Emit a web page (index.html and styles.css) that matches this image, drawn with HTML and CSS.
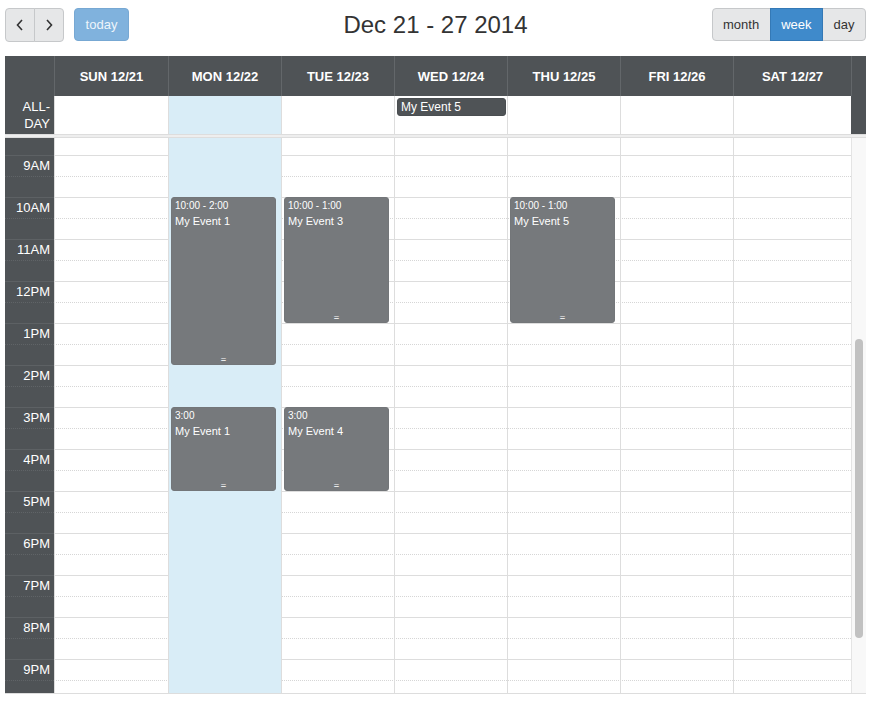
FILE: index.html
```html
<!DOCTYPE html>
<html>
<head>
<meta charset="utf-8">
<link rel="stylesheet" href="styles.css">
</head>
<body>
<div class="cal">
  <div class="toolbar">
    <div class="tb-left">
      <div class="btn-group">
        <button class="btn btn-icon"><svg width="10" height="14" viewBox="0 0 10 14"><polyline points="7,2 2.5,7 7,12" fill="none" stroke="#333" stroke-width="1.6"/></svg></button>
        <button class="btn btn-icon"><svg width="10" height="14" viewBox="0 0 10 14"><polyline points="3,2 7.5,7 3,12" fill="none" stroke="#333" stroke-width="1.6"/></svg></button>
      </div>
      <button class="btn btn-today">today</button>
    </div>
    <h2 class="title">Dec 21 - 27 2014</h2>
    <div class="tb-right">
      <div class="btn-group">
        <button class="btn btn-text">month</button>
        <button class="btn btn-text active">week</button>
        <button class="btn btn-text">day</button>
      </div>
    </div>
  </div>

  <div class="view">
    <div class="grid-row head">
      <div class="axis"></div>
      <div class="hcell">SUN 12/21</div>
      <div class="hcell">MON 12/22</div>
      <div class="hcell">TUE 12/23</div>
      <div class="hcell">WED 12/24</div>
      <div class="hcell">THU 12/25</div>
      <div class="hcell">FRI 12/26</div>
      <div class="hcell">SAT 12/27</div>
      <div class="gutter"></div>
    </div>

    <div class="grid-row allday">
      <div class="axis allday-label">ALL-DAY</div>
      <div class="dcell"></div>
      <div class="dcell today"></div>
      <div class="dcell"></div>
      <div class="dcell"><div class="ad-event">My Event 5</div></div>
      <div class="dcell"></div>
      <div class="dcell"></div>
      <div class="dcell"></div>
      <div class="gutter dark"></div>
    </div>

    <div class="divider"></div>

    <div class="body">
      <div class="scroller">
        <div class="inner">
          <div class="slats">
            <div class="slat half"><div class="ax"></div><div class="c"></div></div>
            <div class="slat"><div class="ax">9AM</div><div class="c"></div></div>
            <div class="slat half"><div class="ax"></div><div class="c"></div></div>
            <div class="slat"><div class="ax">10AM</div><div class="c"></div></div>
            <div class="slat half"><div class="ax"></div><div class="c"></div></div>
            <div class="slat"><div class="ax">11AM</div><div class="c"></div></div>
            <div class="slat half"><div class="ax"></div><div class="c"></div></div>
            <div class="slat"><div class="ax">12PM</div><div class="c"></div></div>
            <div class="slat half"><div class="ax"></div><div class="c"></div></div>
            <div class="slat"><div class="ax">1PM</div><div class="c"></div></div>
            <div class="slat half"><div class="ax"></div><div class="c"></div></div>
            <div class="slat"><div class="ax">2PM</div><div class="c"></div></div>
            <div class="slat half"><div class="ax"></div><div class="c"></div></div>
            <div class="slat"><div class="ax">3PM</div><div class="c"></div></div>
            <div class="slat half"><div class="ax"></div><div class="c"></div></div>
            <div class="slat"><div class="ax">4PM</div><div class="c"></div></div>
            <div class="slat half"><div class="ax"></div><div class="c"></div></div>
            <div class="slat"><div class="ax">5PM</div><div class="c"></div></div>
            <div class="slat half"><div class="ax"></div><div class="c"></div></div>
            <div class="slat"><div class="ax">6PM</div><div class="c"></div></div>
            <div class="slat half"><div class="ax"></div><div class="c"></div></div>
            <div class="slat"><div class="ax">7PM</div><div class="c"></div></div>
            <div class="slat half"><div class="ax"></div><div class="c"></div></div>
            <div class="slat"><div class="ax">8PM</div><div class="c"></div></div>
            <div class="slat half"><div class="ax"></div><div class="c"></div></div>
            <div class="slat"><div class="ax">9PM</div><div class="c"></div></div>
            <div class="slat half"><div class="ax"></div><div class="c"></div></div>
            <div class="slat"><div class="ax"></div><div class="c"></div></div>
          </div>
          <div class="cols">
            <div class="col"></div>
            <div class="col today">
              <div class="ev" style="top:63px;height:168px"><div class="ev-time">10:00 - 2:00</div><div class="ev-title">My Event 1</div><div class="rz">=</div></div>
              <div class="ev" style="top:273px;height:84px"><div class="ev-time">3:00</div><div class="ev-title">My Event 1</div><div class="rz">=</div></div>
            </div>
            <div class="col">
              <div class="ev" style="top:63px;height:126px"><div class="ev-time">10:00 - 1:00</div><div class="ev-title">My Event 3</div><div class="rz">=</div></div>
              <div class="ev" style="top:273px;height:84px"><div class="ev-time">3:00</div><div class="ev-title">My Event 4</div><div class="rz">=</div></div>
            </div>
            <div class="col"></div>
            <div class="col">
              <div class="ev" style="top:63px;height:126px"><div class="ev-time">10:00 - 1:00</div><div class="ev-title">My Event 5</div><div class="rz">=</div></div>
            </div>
            <div class="col"></div>
            <div class="col"></div>
          </div>
        </div>
      </div>
      <div class="scrollbar"><div class="thumb"></div></div>
    </div>
  </div>
</div>
</body>
</html>
```
FILE: styles.css
```css
* { box-sizing: border-box; }
html, body { margin: 0; padding: 0; background: #fff; }
body {
  font-family: "Liberation Sans", Arial, Helvetica, sans-serif;
  color: #333;
}
.cal {
  width: 861px;
  margin: 8px 0 0 5px;
}

/* toolbar */
.toolbar {
  display: grid;
  grid-template-columns: 1fr auto 1fr;
  align-items: start;
  height: 34px;
  margin-bottom: 14px;
}
.tb-left { display: flex; gap: 10px; align-items: flex-start; }
.tb-right { display: flex; justify-content: flex-end; }
.btn-group { display: flex; }
.btn {
  font-family: inherit;
  font-size: 13px;
  height: 33px;
  border: 1px solid #c6c8ca;
  background: #e6e7e8;
  color: #333;
  padding: 0 10.5px;
  margin: 0;
  border-radius: 4px;
  display: flex;
  align-items: center;
  justify-content: center;
}
.btn-group .btn { border-radius: 0; }
.btn-group .btn + .btn { margin-left: -1px; }
.btn-group .btn:first-child { border-radius: 4px 0 0 4px; }
.btn-group .btn:last-child { border-radius: 0 4px 4px 0; }
.btn-icon { width: 30px; height: 34px; padding: 0; }
.btn-today {
  background: #80b2dd;
  border-color: #77a8d3;
  color: #eef5fb;
  width: 55px;
  padding: 0;
}
.btn-text.active {
  background: #3f8acb;
  border-color: #3479b6;
  color: #fff;
  position: relative;
}
.title {
  margin: 0;
  font-size: 24px;
  font-weight: normal;
  line-height: 34px;
  color: #333;
}

/* view */
.grid-row {
  display: grid;
  grid-template-columns: 49px 114px 113px 113px 113px 113px 113px 1fr 15px;
}
.head {
  height: 40px;
  background: #4f5356;
  color: #fff;
}
.axis { background: #4f5356; }
.hcell {
  border-left: 1px solid #63676a;
  display: flex;
  align-items: center;
  justify-content: center;
  font-size: 13px;
  font-weight: bold;
}
.head .gutter { border-left: 1px solid #63676a; }
.allday { height: 38px; }
.allday-label {
  color: #fff;
  font-size: 13px;
  line-height: 17px;
  text-align: right;
  padding: 2px 4px 0 0;
}
.dcell {
  border-left: 1px solid #ddd;
  background: #fff;
  padding: 2px 1px 0 2px;
}
.dcell.today { background: #d9edf7; }
.gutter.dark { background: #4f5356; }
.ad-event {
  background: #4f5356;
  border: 1px solid #4a4e51;
  border-radius: 3px;
  color: #fff;
  font-size: 12px;
  line-height: 16px;
  padding: 0 3px;
}
.divider {
  height: 4px;
  background: #eee;
  border-top: 1px solid #ddd;
  border-bottom: 1px solid #ddd;
}

/* body */
.body {
  display: flex;
  border-bottom: 1px solid #ddd;
}
.scroller {
  flex: 1;
  height: 555px;
  overflow: hidden;
}
.inner {
  position: relative;
  margin-top: -4px;
}
.slat {
  display: grid;
  grid-template-columns: 49px 1fr;
  height: 21px;
}
.slat .ax {
  background: #4f5356;
  border-top: 1px solid #5d6164;
  color: #fff;
  font-size: 13px;
  line-height: 20px;
  text-align: right;
  padding-right: 4px;
}
.slat .c { border-top: 1px solid #ddd; }
.slat.half .ax { border-top: 1px dotted #606467; }
.slat.half .c { border-top: 1px dotted #d6d6d6; }

.cols {
  position: absolute;
  top: 0;
  bottom: 0;
  left: 49px;
  right: 0;
  display: grid;
  grid-template-columns: 114px 113px 113px 113px 113px 113px 1fr;
}
.col {
  border-left: 1px solid #ddd;
  position: relative;
}
.col.today { background: #d9edf7; }
.ev {
  position: absolute;
  left: 2px;
  right: 5px;
  background: #76797c;
  border: 1px solid #737679;
  border-radius: 3px;
  color: #fff;
  padding: 1px 4px 0 3px;
  overflow: hidden;
}
.ev-time { font-size: 10px; line-height: 14px; }
.ev-title { font-size: 11px; line-height: 16px; }
.rz {
  position: absolute;
  left: 0;
  right: 0;
  bottom: 1px;
  text-align: center;
  font-family: "DejaVu Sans Mono", monospace;
  font-size: 9px;
  line-height: 8px;
}

.scrollbar {
  width: 15px;
  height: 555px;
  background: #f8f8f8;
  border-left: 1px solid #e4e4e4;
  padding: 201px 0 0 3px;
}
.thumb {
  width: 8px;
  height: 299px;
  background: #c1c1c1;
  border-radius: 4px;
}
```
